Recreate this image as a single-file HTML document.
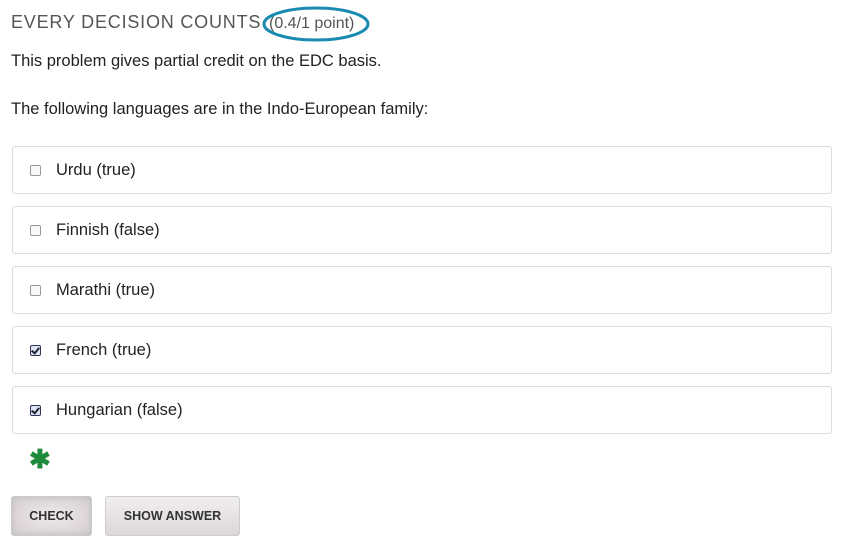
<!DOCTYPE html>
<html><head><style>
body{margin:0;background:#fff;font-family:"Liberation Sans",sans-serif;color:#313131;width:850px;height:549px;position:relative;overflow:hidden}
.h{position:absolute;left:11px;top:12px;font-size:18px;letter-spacing:0.8px;color:#555}
.pt{position:absolute;left:269px;top:15px;font-size:16px;color:#555}
.p{position:absolute;left:11px;font-size:16.5px;color:#222}
.box{position:absolute;left:12px;width:818px;height:46px;border:1px solid #ddd;border-radius:3px}
.box .cb{position:absolute;left:17px;top:18px;width:9px;height:9px;border:1px solid #999;border-radius:2px;background:#f8f8f8}
.box .cb.on{border-color:#335;background:#dde4f5}
.box .cb.on:after{content:"";position:absolute;left:2px;top:0px;width:3px;height:6px;border:solid #223;border-width:0 2px 2px 0;transform:rotate(40deg)}
.box span{position:absolute;left:43px;top:14px;font-size:16.5px;color:#222}
.btn{position:absolute;top:496px;height:38px;border:1px solid #ccc;border-radius:3px;font-size:12.5px;font-weight:bold;color:#333;text-align:center;line-height:38px;background:linear-gradient(#f1eeee,#ddd8d8)}
</style></head><body>
<div class="h">EVERY DECISION COUNTS</div>
<div class="pt">(0.4/1 point)</div>
<svg style="position:absolute;left:0;top:0" width="850" height="60"><ellipse cx="316" cy="24" rx="52" ry="16" fill="none" stroke="#1a8bb0" stroke-width="3"/></svg>
<div class="p" style="top:52px">This problem gives partial credit on the EDC basis.</div>
<div class="p" style="top:100px">The following languages are in the Indo-European family:</div>
<div class="box" style="top:146px"><div class="cb"></div><span>Urdu (true)</span></div>
<div class="box" style="top:206px"><div class="cb"></div><span>Finnish (false)</span></div>
<div class="box" style="top:266px"><div class="cb"></div><span>Marathi (true)</span></div>
<div class="box" style="top:326px"><div class="cb on"></div><span>French (true)</span></div>
<div class="box" style="top:386px"><div class="cb on"></div><span>Hungarian (false)</span></div>
<div style="position:absolute;left:29px;top:444px;font-size:26px;font-weight:bold;color:#1e8a3c">✱</div>
<div class="btn" style="left:11px;width:79px;background:radial-gradient(#efeaea,#d5cccc);box-shadow:inset 0 0 6px #bbb">CHECK</div>
<div class="btn" style="left:105px;width:133px">SHOW ANSWER</div>
</body></html>
